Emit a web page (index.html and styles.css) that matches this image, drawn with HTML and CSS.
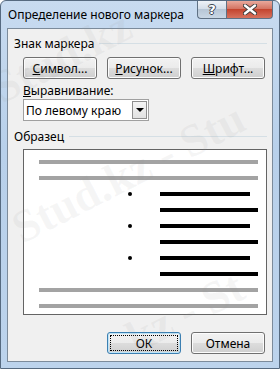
FILE: index.html
```html
<!DOCTYPE html>
<html lang="ru">
<head>
    <meta charset="UTF-8">
    <meta name="viewport" content="width=device-width, initial-scale=1.0">
    <title>Определение нового маркера</title>
    <link rel="stylesheet" href="styles.css">
</head>
<body>
    <div class="window">
        <div class="titlebar">
            <span class="title">Определение нового маркера</span>
            <div class="caption-buttons">
                <span class="cap-btn help">?</span>
                <span class="cap-btn close">
                    <svg width="14" height="11" viewBox="0 0 14 11">
                        <path d="M2 1.5 L12 9.5 M12 1.5 L2 9.5" stroke="#3b3b3b" stroke-width="4.2" stroke-linecap="round"/>
                        <path d="M2 1.5 L12 9.5 M12 1.5 L2 9.5" stroke="#fff" stroke-width="2.4" stroke-linecap="round"/>
                    </svg>
                </span>
            </div>
        </div>

        <div class="client">
            <div class="group-head">
                <span>Знак маркера</span>
                <div class="rule"></div>
            </div>

            <div class="btn-row">
                <button class="btn"><u>С</u>имвол...</button>
                <button class="btn"><u>Р</u>исунок...</button>
                <button class="btn"><u>Ш</u>рифт...</button>
            </div>

            <div class="field-label"><u>В</u>ыравнивание:</div>
            <div class="combo">
                <span class="combo-text">По левому краю</span>
                <span class="combo-arrow"></span>
            </div>

            <div class="group-head second">
                <span>Образец</span>
                <div class="rule"></div>
            </div>

            <div class="preview">
                <div class="line gray"></div>
                <div class="line gray"></div>
                <div class="line"><span class="mark dot"></span><span class="bar short"></span></div>
                <div class="line"><span class="mark"></span><span class="bar"></span></div>
                <div class="line"><span class="mark dot"></span><span class="bar short"></span></div>
                <div class="line"><span class="mark"></span><span class="bar"></span></div>
                <div class="line"><span class="mark dot"></span><span class="bar short"></span></div>
                <div class="line"><span class="mark"></span><span class="bar"></span></div>
                <div class="line gray"></div>
                <div class="line gray"></div>
            </div>

            <div class="footer">
                <button class="btn default"><span class="focus">ОК</span></button>
                <button class="btn">Отмена</button>
            </div>
        </div>

        <!-- faint site watermark over the screenshot -->
        <div class="watermark">
            <span class="wm wm1">Stud.kz</span>
            <span class="wm wm2">Stud.kz - Stu</span>
            <span class="wm wm3">kz - St</span>
        </div>
    </div>
</body>
</html>
```

FILE: styles.css
```css
body {
    margin: 0;
    padding: 0;
    font-family: "Noto Sans", "Liberation Sans", sans-serif;
    font-size: 12px;
    color: #000;
    background: #fff;
}

.window {
    position: relative;
    width: 280px;
    height: 369px;
    box-sizing: border-box;
    border: 1px solid #566a80;
    border-radius: 6px 6px 0 0;
    background: linear-gradient(#c8dbf0, #b8d0ea 40%, #bcd3ec);
    padding: 0 6px 6px 6px;
    display: flex;
    flex-direction: column;
    overflow: hidden;
}

.titlebar {
    height: 27px;
    display: flex;
    justify-content: space-between;
    align-items: flex-start;
}

.title {
    padding: 6px 0 0 1px;
    line-height: 15px;
}

.caption-buttons {
    display: flex;
}

.cap-btn {
    height: 18px;
    box-sizing: border-box;
    border: 1px solid #5f7184;
    border-top: none;
    display: flex;
    align-items: center;
    justify-content: center;
}

.help {
    width: 29px;
    border-right: none;
    border-radius: 0 0 0 4px;
    background: linear-gradient(#eef2f7, #d4dee9 45%, #b7c6d6 50%, #c9d7e5);
    color: #fff;
    font-family: "DejaVu Sans", sans-serif;
    font-weight: bold;
    font-size: 13px;
    text-shadow: 1px 0 #3b4652, -1px 0 #3b4652, 0 1px #3b4652, 0 -1px #3b4652;
}

.close {
    width: 47px;
    border-radius: 0 0 4px 0;
    background: linear-gradient(#e9a99c, #d47564 45%, #c4452f 50%, #d7725e);
}

.client {
    flex: 1;
    background: #f0f0f0;
    border: 1px solid #7c8b9b;
    padding: 0 5px 0 6px;
    display: flex;
    flex-direction: column;
}

.group-head {
    display: flex;
    align-items: center;
    height: 15px;
    margin-top: 7px;
}

.group-head.second {
    margin-top: 8px;
}

.group-head .rule {
    flex: 1;
    height: 1px;
    background: #d5dfe5;
    margin-left: 5px;
}

.btn-row {
    display: flex;
    gap: 10px;
    margin-top: 6px;
    padding-left: 9px;
}

.btn {
    width: 74px;
    height: 22px;
    box-sizing: border-box;
    border: 1px solid #707070;
    border-radius: 3px;
    background: linear-gradient(#f2f2f2, #ebebeb 50%, #dddddd 50%, #cfcfcf);
    font-family: inherit;
    font-size: 12px;
    color: #000;
    padding: 0;
    box-shadow: inset 0 0 0 1px #fcfcfc;
}

.field-label {
    margin: 4px 0 0 9px;
    line-height: 15px;
}

.combo {
    margin: 1px 0 0 9px;
    width: 126px;
    height: 22px;
    box-sizing: border-box;
    border: 1px solid #a0a0a0;
    background: #fff;
    display: flex;
    align-items: center;
    justify-content: space-between;
}

.combo-text {
    padding-left: 2px;
}

.combo-arrow {
    width: 15px;
    height: 18px;
    margin-right: 1px;
    box-sizing: border-box;
    border: 1px solid #8f8f8f;
    background: linear-gradient(#f4f4f4, #e2e2e2);
    display: flex;
    align-items: center;
    justify-content: center;
}

.combo-arrow::after {
    content: "";
    border-left: 4px solid transparent;
    border-right: 4px solid transparent;
    border-top: 4px solid #000;
}

.preview {
    margin: 5px 0 0 9px;
    width: 244px;
    height: 166px;
    box-sizing: border-box;
    border: 1px solid #646464;
    background: #fff;
    padding: 10px 7px 0 15px;
}

.line {
    height: 16px;
    display: flex;
    align-items: flex-start;
}

.line.gray::before {
    content: "";
    display: block;
    width: 219px;
    height: 4px;
    background: #a3a3a3;
}

.mark {
    width: 121px;
    height: 4px;
    position: relative;
}

.mark.dot::after {
    content: "";
    position: absolute;
    left: 89px;
    top: 0;
    width: 4px;
    height: 4px;
    border-radius: 50%;
    background: #000;
}

.bar {
    width: 98px;
    height: 4px;
    background: #000;
}

.bar.short {
    width: 90px;
}

.footer {
    display: flex;
    justify-content: flex-end;
    gap: 10px;
    margin-top: 17px;
    padding-right: 2px;
}

.btn.default {
    border-color: #3c7fb1;
    box-shadow: inset 0 0 0 1px #bde4f8;
    padding: 2px;
}

.focus {
    display: flex;
    align-items: center;
    justify-content: center;
    height: 100%;
    box-sizing: border-box;
    border: 1px dotted #000;
}

.watermark {
    position: absolute;
    inset: 0;
    pointer-events: none;
    overflow: hidden;
}

.wm {
    position: absolute;
    font-family: "Liberation Serif", serif;
    font-weight: bold;
    font-size: 46px;
    color: rgba(150, 150, 150, 0.09);
    white-space: nowrap;
    transform-origin: left bottom;
    transform: rotate(-27deg);
}

.wm1 {
    left: 6px;
    top: 60px;
}

.wm2 {
    left: 26px;
    top: 200px;
}

.wm3 {
    left: 140px;
    top: 310px;
}
```
